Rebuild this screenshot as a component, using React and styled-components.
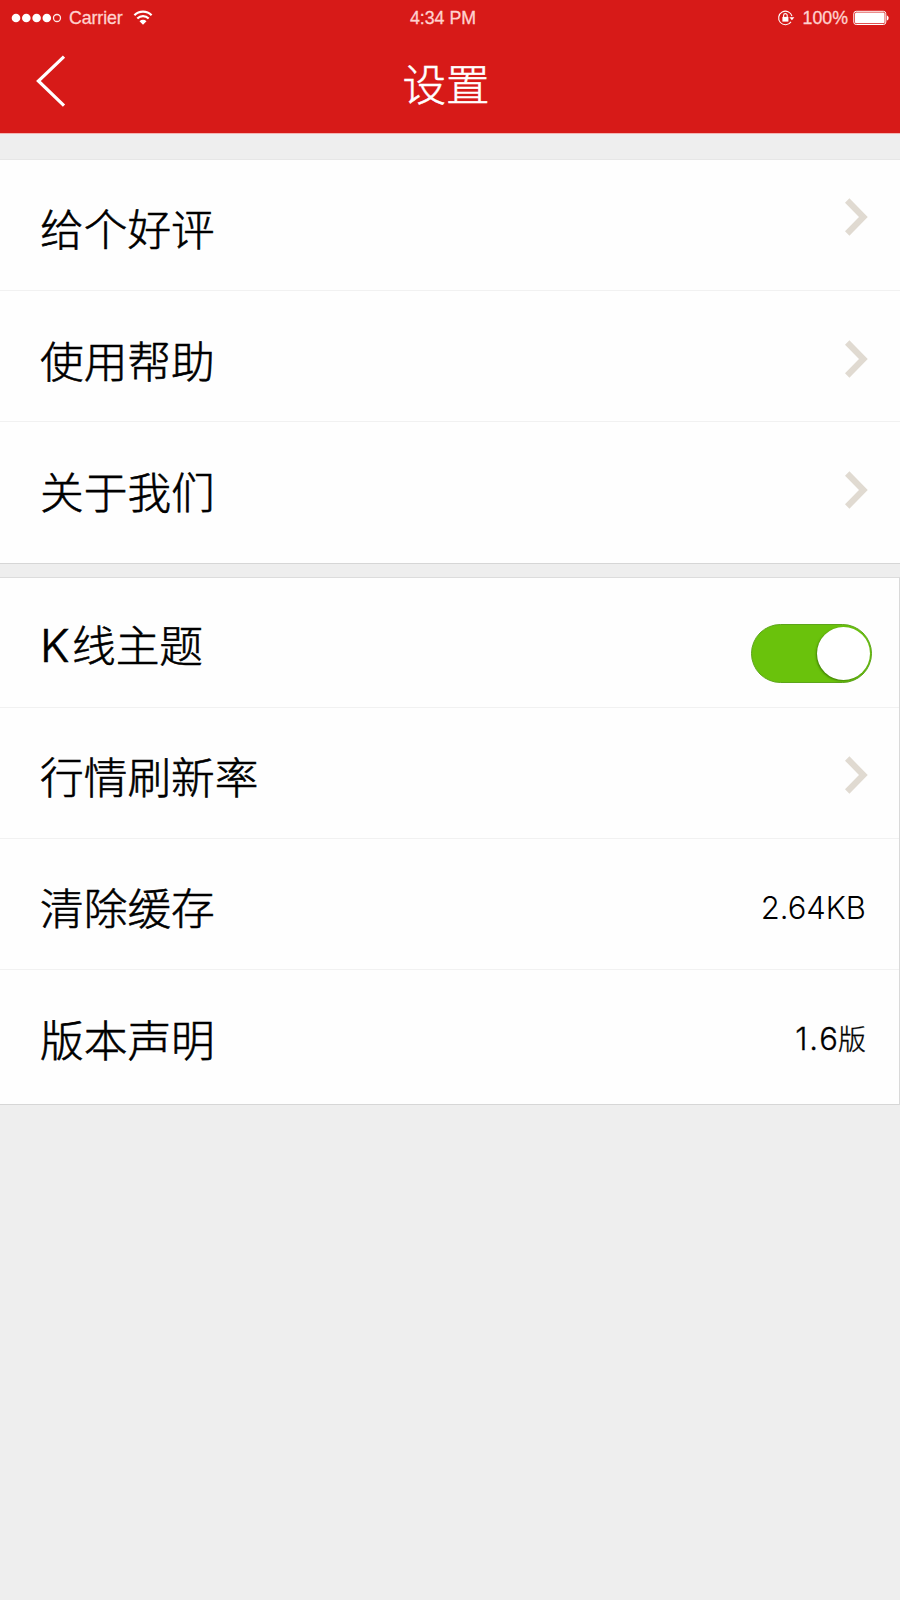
import React, { useState } from "react";
import styled, { createGlobalStyle } from "styled-components";

const GlobalStyle = createGlobalStyle`
  * {
    box-sizing: border-box;
  }

  body {
    margin: 0;
    background: #eee;
  }
`;

const Page = styled.div`
  width: 900px;
  height: 1600px;
  overflow: hidden;
  background: #eee;
  color: #000;
  font-family: "Inter", "Noto Sans CJK SC", sans-serif;
`;

const Header = styled.header`
  height: 134px;
  background: #d71a18;
  border-bottom: 1px solid #f3b4b2;
  color: #fff;
`;

const StatusBar = styled.div`
  display: grid;
  grid-template-columns: 1fr auto 1fr;
  align-items: center;
  height: 35px;
  padding: 0 11px;
  font-family: "Liberation Sans", Arial, sans-serif;
  font-size: 17.8px;
  line-height: 20px;
  color: #ffd2cf;
  -webkit-text-stroke: 0.3px #ffd2cf;
`;

const StatusLeft = styled.div`
  display: flex;
  align-items: center;

  svg:last-child {
    margin-left: 10px;
  }
`;

const Carrier = styled.span`
  margin-left: 7px;
  letter-spacing: -0.1px;
`;

const Time = styled.span`
  margin-right: 14px;
`;

const StatusRight = styled.div`
  display: flex;
  align-items: center;
  justify-content: flex-end;
`;

const Percent = styled.span`
  margin: 0 5px 0 8px;
`;

const TitleBar = styled.div`
  display: grid;
  grid-template-columns: 80px 1fr 80px;
  align-items: center;
  height: 98px;
`;

const BackButton = styled.button`
  display: flex;
  width: 32px;
  height: 54px;
  margin: -7px 0 0 35px;
  padding: 0;
  border: 0;
  background: none;
  color: #fff;
`;

const Title = styled.h1`
  margin: 2px 8px 0 0;
  font-size: 43.5px;
  font-weight: 300;
  line-height: 60px;
  text-align: center;
  -webkit-text-stroke: 0.5px currentColor;
`;

const Group = styled.section`
  margin-top: ${({ $gap }) => $gap}px;
  border-top: 1px solid ${({ $line }) => $line};
  border-bottom: 1px solid #d6d6d6;
  border-right: ${({ $edge }) => ($edge ? "1px solid #d9d9d9" : "0")};
  background: #fefefe;
`;

const Row = styled.div`
  display: flex;
  justify-content: space-between;
  align-items: flex-start;
  height: ${({ $height }) => $height}px;
  padding: 0 ${({ $right }) => $right}px 0 40px;
  border-bottom: 1px solid #f1f1f1;

  &:last-child {
    border-bottom: 0;
  }
`;

const Label = styled.span`
  margin-top: ${({ $top }) => $top}px;
  font-size: 43.7px;
  font-weight: 300;
  line-height: 60px;
  -webkit-text-stroke: 0.6px currentColor;
`;

const Latin = styled.span`
  font-size: 45.5px;
  letter-spacing: 2.5px;
`;

const Accessory = styled.div`
  display: flex;
  margin-top: ${({ $top }) => $top}px;
`;

const Value = styled.span`
  font-size: 31px;
  font-weight: 350;
  line-height: 40px;
`;

const Version = styled(Value)`
  font-weight: 300;
  letter-spacing: 2px;
  -webkit-text-stroke: 0.3px currentColor;
`;

const Unit = styled.span`
  margin-left: -2px;
  font-size: 28px;
  letter-spacing: 0;
`;

const Switch = styled.button`
  display: flex;
  justify-content: ${({ $on }) => ($on ? "flex-end" : "flex-start")};
  align-items: center;
  width: 121px;
  height: 59px;
  padding: 0 1px;
  border: 1px solid #5da51a;
  border-radius: 30px;
  background: ${({ $on }) => ($on ? "#6ac20c" : "#ddd")};
`;

const Knob = styled.span`
  width: 53px;
  height: 53px;
  border-radius: 50%;
  background: #fff;
  box-shadow: -1px 1px 2px rgba(40, 90, 0, 0.6);
`;

const SignalIcon = () => (
  <svg width="51" height="12" viewBox="0 0 51 12" fill="#fff">
    {[5, 15.3, 25.6, 35.8].map((cx) => (
      <circle key={cx} cx={cx} cy="6" r="4.3" />
    ))}
    <circle cx="46" cy="6" r="3.5" fill="none" stroke="#ffe8e6" strokeWidth="1.3" />
  </svg>
);

const WifiIcon = () => (
  <svg width="20" height="16" viewBox="0 0 20 16" fill="none" stroke="#fff" strokeWidth="2.2">
    <path d="M1.4 5.2a12.2 12.2 0 0 1 17.2 0" />
    <path d="M4.3 8.6a8 8 0 0 1 11.4 0" />
    <path d="M6.5 11.2a4.9 4.9 0 0 1 7 0L10 14.8z" fill="#fff" stroke="none" />
  </svg>
);

const LockIcon = () => (
  <svg width="18" height="18" viewBox="0 0 18 18" fill="none" stroke="#fff" strokeWidth="1.1">
    <path d="M14 12.9A6.8 6.8 0 1 1 15 7.2" />
    <path d="M12.4 8.2h5l-2.5 3z" fill="#fff" stroke="none" />
    <rect x="5.4" y="7.9" width="6" height="4.7" fill="#fff" stroke="none" />
    <path d="M6.6 8.3V6.4a1.8 1.8 0 0 1 3.6 0v1.9" />
  </svg>
);

const BatteryIcon = () => (
  <svg width="36" height="16" viewBox="0 0 36 16" fill="#fff">
    <rect x="0.8" y="1.3" width="32" height="13.2" rx="2.4" fill="none" stroke="#fff" />
    <rect x="2" y="2.5" width="29.6" height="10.8" rx="1.2" />
    <path d="M33.8 5.4c1.1.3 1.8 1.2 1.8 2.5s-.7 2.2-1.8 2.5z" />
  </svg>
);

const BackIcon = () => (
  <svg width="32" height="54" viewBox="0 0 32 54" fill="none" stroke="currentColor" strokeWidth="3.2">
    <path d="M29 2.6L3.4 27L29 51.6" />
  </svg>
);

const Chevron = () => (
  <svg width="23" height="38" viewBox="0 0 23 38" fill="none" stroke="#e0dad1" strokeWidth="6.2">
    <path d="M2.2 2.5L18.4 19L2.2 35.5" />
  </svg>
);

const aboutRows = [
  { label: "给个好评", height: 131, labelTop: 41, accessoryTop: 38 },
  { label: "使用帮助", height: 131, labelTop: 42, accessoryTop: 49 },
  { label: "关于我们", height: 141, labelTop: 42, accessoryTop: 49 },
];

const App = () => {
  const [klineTheme, setKlineTheme] = useState(true);

  return (
    <>
      <GlobalStyle />
      <Page>
        <Header>
          <StatusBar>
            <StatusLeft>
              <SignalIcon />
              <Carrier>Carrier</Carrier>
              <WifiIcon />
            </StatusLeft>
            <Time>4:34 PM</Time>
            <StatusRight>
              <LockIcon />
              <Percent>100%</Percent>
              <BatteryIcon />
            </StatusRight>
          </StatusBar>
          <TitleBar>
            <BackButton aria-label="返回">
              <BackIcon />
            </BackButton>
            <Title>设置</Title>
          </TitleBar>
        </Header>

        <Group $gap={25} $line="#e6e6e6">
          {aboutRows.map((item) => (
            <Row key={item.label} $height={item.height} $right={32}>
              <Label $top={item.labelTop}>{item.label}</Label>
              <Accessory $top={item.accessoryTop}>
                <Chevron />
              </Accessory>
            </Row>
          ))}
        </Group>

        <Group $gap={13} $line="#dcdcdc" $edge>
          <Row $height={130} $right={27}>
            <Label $top={38}>
              <Latin>K</Latin>线主题
            </Label>
            <Accessory $top={46}>
              <Switch
                role="switch"
                aria-checked={klineTheme}
                $on={klineTheme}
                onClick={() => setKlineTheme(!klineTheme)}
              >
                <Knob />
              </Switch>
            </Accessory>
          </Row>
          <Row $height={131} $right={31}>
            <Label $top={41}>行情刷新率</Label>
            <Accessory $top={48}>
              <Chevron />
            </Accessory>
          </Row>
          <Row $height={131} $right={33}>
            <Label $top={41}>清除缓存</Label>
            <Accessory $top={49}>
              <Value>2.64KB</Value>
            </Accessory>
          </Row>
          <Row $height={134} $right={33}>
            <Label $top={42}>版本声明</Label>
            <Accessory $top={49}>
              <Version>
                1.6<Unit>版</Unit>
              </Version>
            </Accessory>
          </Row>
        </Group>
      </Page>
    </>
  );
};

export default App;
